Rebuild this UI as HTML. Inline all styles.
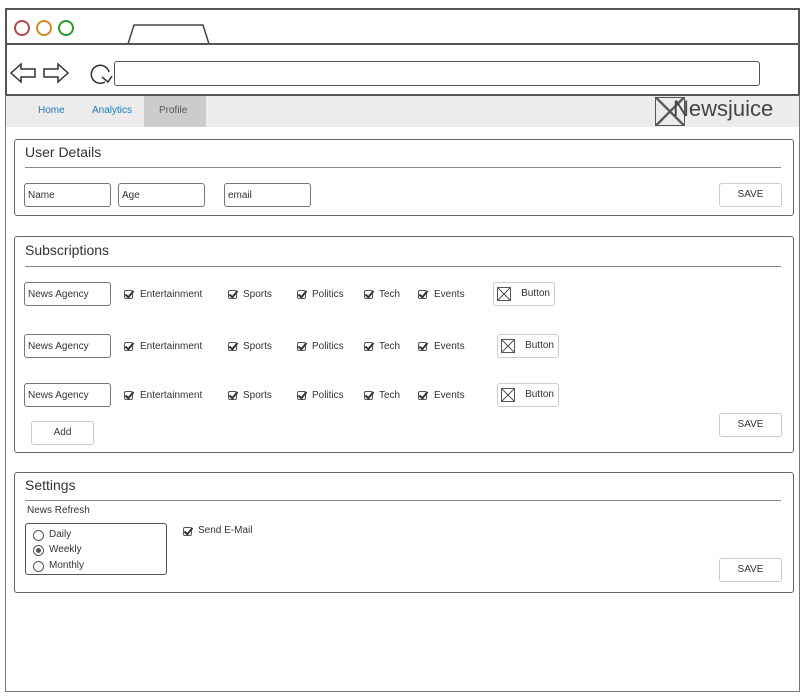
<!DOCTYPE html>
<html><head><meta charset="utf-8"><style>
*{box-sizing:border-box;margin:0;padding:0}
body{width:811px;height:697px;background:#fff;position:relative;overflow:hidden;font-family:"Liberation Sans",sans-serif;color:#333}
.a{position:absolute}
.box{position:absolute;border:1.5px solid #666;border-radius:3px;background:#fff}
.inp{position:absolute;border:1px solid #777;border-radius:3px;font-size:10px;padding:6px 3px;height:24px;background:#fff}
.btn{position:absolute;border:1px solid #ccc;border-radius:3px;font-size:10px;text-align:center;line-height:22px;background:#fff}
.t{position:absolute;font-size:10px;white-space:nowrap}
.cb{position:absolute;width:9px;height:9px;border:1px solid #555;border-radius:2px}
.cb:after{content:"";position:absolute;left:2px;top:-2px;width:3px;height:7px;border-right:2px solid #333;border-bottom:2px solid #333;transform:rotate(40deg)}
.h{position:absolute;font-size:14px}
.line{position:absolute;height:1px;background:#888}
.x{position:absolute;width:14px;height:14px;border:1px solid #555;background:linear-gradient(45deg,transparent 46%,#555 48%,#555 52%,transparent 54%),linear-gradient(-45deg,transparent 46%,#555 48%,#555 52%,transparent 54%)}
.rd{position:absolute;width:11px;height:11px;border:1px solid #555;border-radius:50%}
</style></head><body>
<div class="a" style="left:5px;top:8px;width:795px;height:37px;border:2.5px solid #555;border-bottom:2px solid #555"></div>
<div class="a" style="left:14px;top:20px;width:16px;height:16px;border:2px solid #b04a4a;border-radius:50%"></div>
<div class="a" style="left:36px;top:20px;width:16px;height:16px;border:2px solid #d08a25;border-radius:50%"></div>
<div class="a" style="left:58px;top:20px;width:16px;height:16px;border:2px solid #2a9a2a;border-radius:50%"></div>
<svg class="a" style="left:125px;top:22px" width="85" height="22"><path d="M3 22 L9 3 L78 3 L84 22" fill="none" stroke="#444" stroke-width="1.5"/></svg>
<div class="a" style="left:5px;top:43px;width:795px;height:53px;border:2.5px solid #555"></div>
<svg class="a" style="left:8px;top:60px" width="110" height="28"><path d="M3 13 L13 4 L13 9 L27 9 L27 17 L13 17 L13 22 Z" fill="none" stroke="#333" stroke-width="1.5"/><path d="M60 13 L50 4 L50 9 L36 9 L36 17 L50 17 L50 22 Z" fill="none" stroke="#333" stroke-width="1.5"/><path d="M97 22 A9 9 0 1 1 101 12 M94 17 L100 22 L104 16" fill="none" stroke="#333" stroke-width="1.5"/></svg>
<div class="a" style="left:114px;top:61px;width:646px;height:25px;border:1.5px solid #555;border-radius:3px"></div>
<div class="a" style="left:5px;top:95px;width:795px;height:597px;border:1px solid #777;border-top:none"></div>
<div class="a" style="left:6px;top:96px;width:793px;height:31px;background:#ececec"></div>
<div class="a" style="left:144px;top:96px;width:62px;height:31px;background:#ccc"></div>
<div class="t" style="left:38px;top:105px;color:#1a7ac0">Home</div>
<div class="t" style="left:92px;top:105px;color:#1a7ac0">Analytics</div>
<div class="t" style="left:159px;top:105px;color:#555">Profile</div>
<div class="x" style="left:655px;top:97px;width:30px;height:29px"></div>
<div class="a" style="left:673px;top:96px;font-size:22px;color:#444">Newsjuice</div>

<div class="box" style="left:14px;top:139px;width:780px;height:77px"></div>
<div class="h" style="left:25px;top:144px">User Details</div>
<div class="line" style="left:25px;top:167px;width:756px"></div>
<div class="inp" style="left:24px;top:183px;width:87px">Name</div>
<div class="inp" style="left:118px;top:183px;width:87px">Age</div>
<div class="inp" style="left:224px;top:183px;width:87px">email</div>
<div class="btn" style="left:719px;top:183px;width:63px">SAVE</div>

<div class="box" style="left:14px;top:236px;width:780px;height:217px"></div>
<div class="h" style="left:25px;top:242px">Subscriptions</div>
<div class="line" style="left:25px;top:266px;width:756px"></div>

<div class="inp" style="left:24px;top:282px;width:87px">News Agency</div>
<div class="cb" style="left:124px;top:290px"></div><div class="t" style="left:140px;top:289px">Entertainment</div>
<div class="cb" style="left:228px;top:290px"></div><div class="t" style="left:243px;top:289px">Sports</div>
<div class="cb" style="left:297px;top:290px"></div><div class="t" style="left:312px;top:289px">Politics</div>
<div class="cb" style="left:364px;top:290px"></div><div class="t" style="left:379px;top:289px">Tech</div>
<div class="cb" style="left:418px;top:290px"></div><div class="t" style="left:434px;top:289px">Events</div>
<div class="btn" style="left:493px;top:282px;width:62px;text-align:right;padding-right:4px">Button</div><div class="x" style="left:497px;top:287px"></div>

<div class="inp" style="left:24px;top:334px;width:87px">News Agency</div>
<div class="cb" style="left:124px;top:342px"></div><div class="t" style="left:140px;top:341px">Entertainment</div>
<div class="cb" style="left:228px;top:342px"></div><div class="t" style="left:243px;top:341px">Sports</div>
<div class="cb" style="left:297px;top:342px"></div><div class="t" style="left:312px;top:341px">Politics</div>
<div class="cb" style="left:364px;top:342px"></div><div class="t" style="left:379px;top:341px">Tech</div>
<div class="cb" style="left:418px;top:342px"></div><div class="t" style="left:434px;top:341px">Events</div>
<div class="btn" style="left:497px;top:334px;width:62px;text-align:right;padding-right:4px">Button</div><div class="x" style="left:501px;top:339px"></div>

<div class="inp" style="left:24px;top:383px;width:87px">News Agency</div>
<div class="cb" style="left:124px;top:391px"></div><div class="t" style="left:140px;top:390px">Entertainment</div>
<div class="cb" style="left:228px;top:391px"></div><div class="t" style="left:243px;top:390px">Sports</div>
<div class="cb" style="left:297px;top:391px"></div><div class="t" style="left:312px;top:390px">Politics</div>
<div class="cb" style="left:364px;top:391px"></div><div class="t" style="left:379px;top:390px">Tech</div>
<div class="cb" style="left:418px;top:391px"></div><div class="t" style="left:434px;top:390px">Events</div>
<div class="btn" style="left:497px;top:383px;width:62px;text-align:right;padding-right:4px">Button</div><div class="x" style="left:501px;top:388px"></div>

<div class="btn" style="left:31px;top:421px;width:63px">Add</div>
<div class="btn" style="left:719px;top:413px;width:63px">SAVE</div>

<div class="box" style="left:14px;top:472px;width:780px;height:121px"></div>
<div class="h" style="left:25px;top:477px">Settings</div>
<div class="line" style="left:25px;top:500px;width:756px"></div>
<div class="t" style="left:27px;top:505px">News Refresh</div>
<div class="a" style="left:25px;top:523px;width:142px;height:52px;border:1.5px solid #555;border-radius:3px"></div>
<div class="rd" style="left:33px;top:530px"></div><div class="t" style="left:49px;top:529px">Daily</div>
<div class="rd" style="left:33px;top:545px"></div><div class="a" style="left:36px;top:548px;width:5px;height:5px;border-radius:50%;background:#555"></div><div class="t" style="left:49px;top:544px">Weekly</div>
<div class="rd" style="left:33px;top:561px"></div><div class="t" style="left:49px;top:560px">Monthly</div>
<div class="cb" style="left:183px;top:527px"></div><div class="t" style="left:198px;top:525px">Send E-Mail</div>
<div class="btn" style="left:719px;top:558px;width:63px">SAVE</div>
</body></html>
